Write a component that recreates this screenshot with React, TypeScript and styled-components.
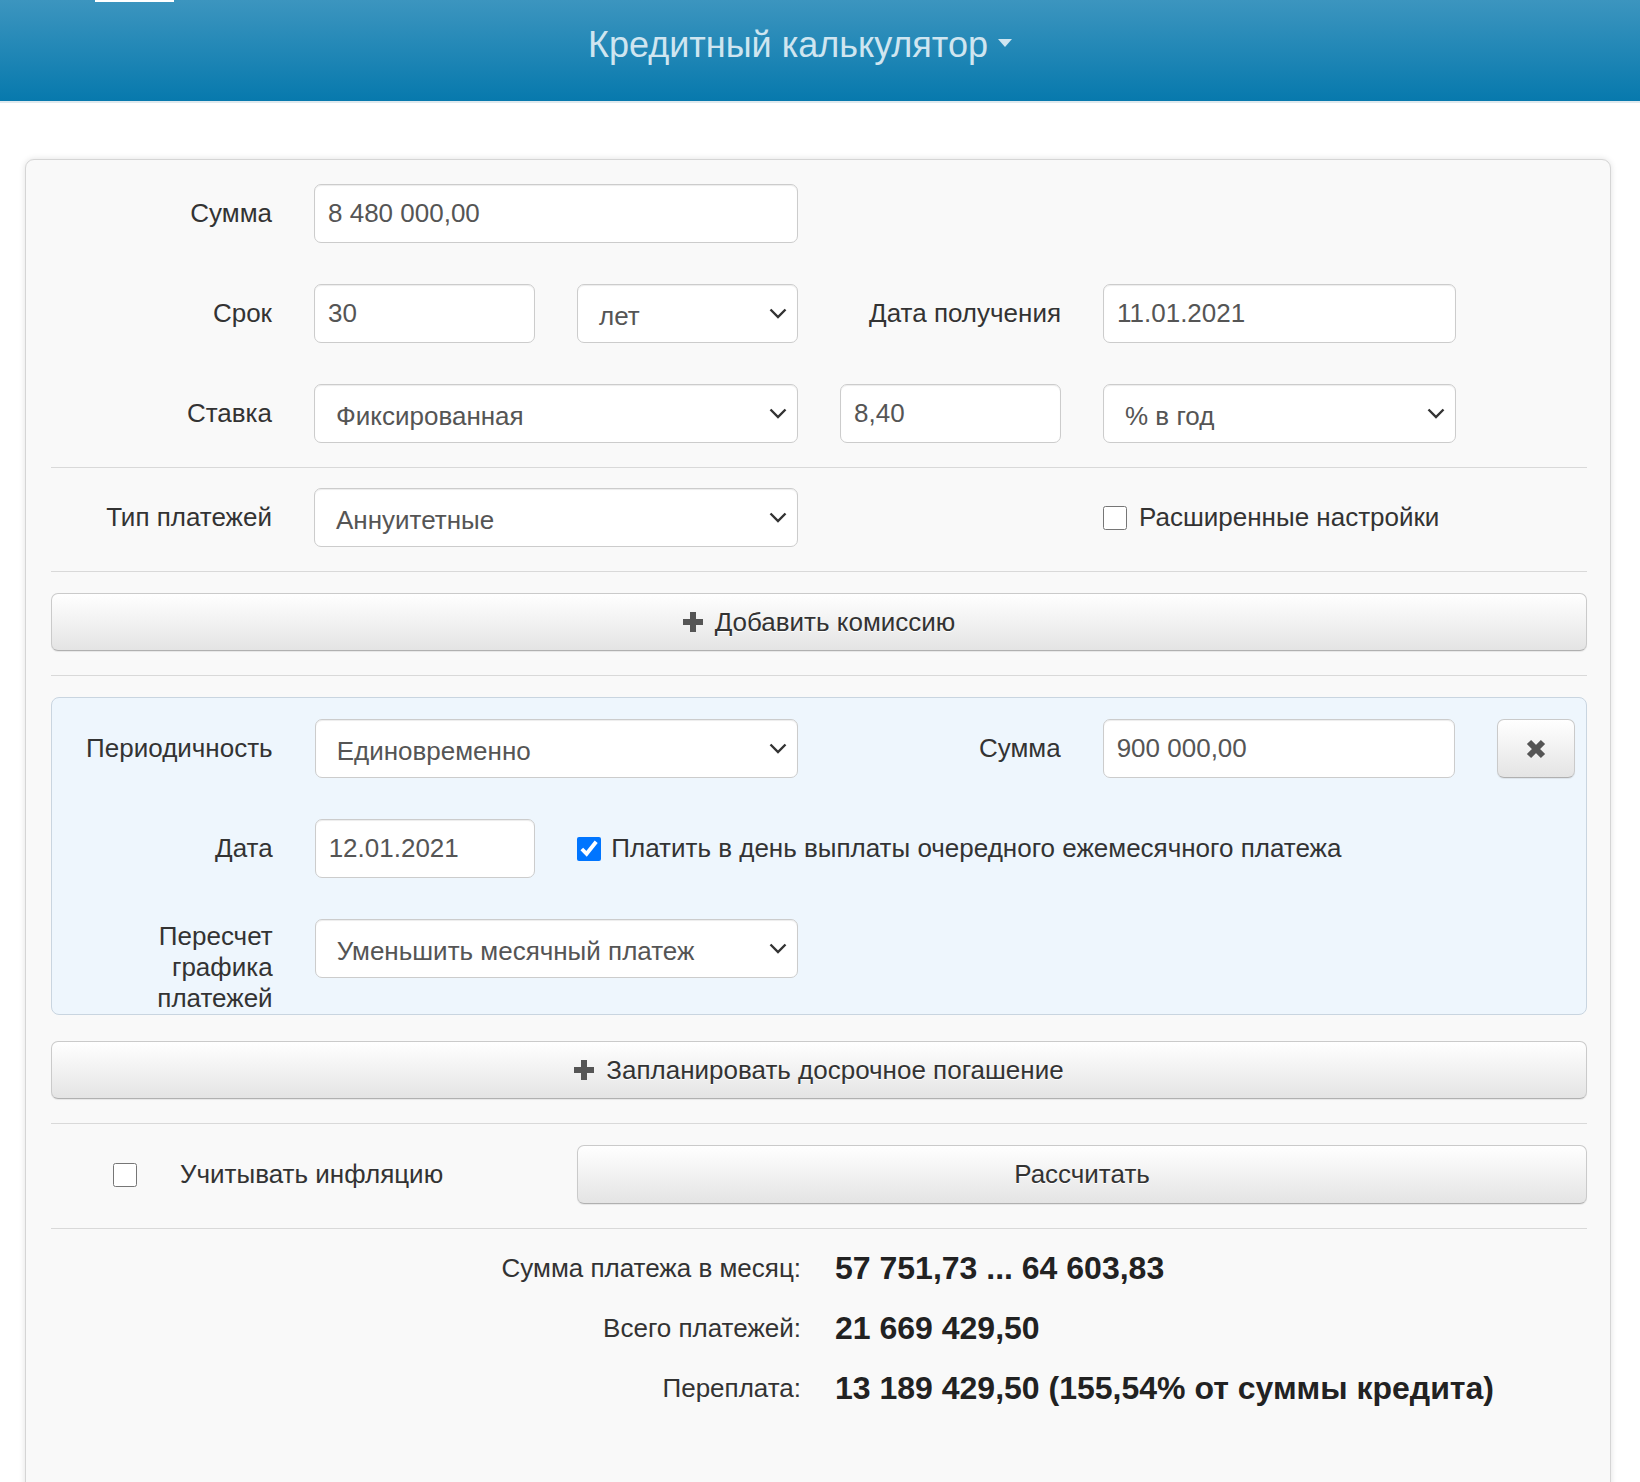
import React from "react";
import styled, { createGlobalStyle } from "styled-components";

const GlobalStyle = createGlobalStyle`
  html, body { margin: 0; padding: 0; background: #fff; }
  body { font-family: "Liberation Sans", Arial, Helvetica, sans-serif; color: #333; }
  *, *::before, *::after { box-sizing: border-box; }
`;

const Page = styled.div`
  width: 1640px;
  height: 1482px;
  overflow: hidden;
`;

const Header = styled.header`
  position: relative;
  height: 103px;
  background: linear-gradient(to bottom, #3c95bf 0%, #0779ad 100%);
  border-bottom: 2px solid #dfe9ee;
  display: flex;
  justify-content: center;
  align-items: flex-start;
  padding: 24px 40px 0 0;
`;

const ActiveTab = styled.span`
  position: absolute;
  top: 0;
  left: 95px;
  width: 79px;
  height: 2px;
  background: #fff;
`;

const Title = styled.div`
  display: flex;
  align-items: flex-start;
  gap: 10px;
  font-size: 36px;
  line-height: 42px;
  color: #cfe5f0;
`;

const Caret = styled.span`
  width: 0;
  height: 0;
  margin-top: 15px;
  border-left: 7px solid transparent;
  border-right: 7px solid transparent;
  border-top: 8px solid #cfe5f0;
`;

const Card = styled.main`
  width: 1586px;
  min-height: 1340px;
  margin: 56px 0 0 25px;
  background: #f9f9f9;
  border: 1px solid #d5d5d5;
  border-radius: 9px;
  box-shadow: 0 0 6px rgba(0, 0, 0, 0.12);
  padding: 24px 23px 0 25px;
  display: flex;
  flex-direction: column;
`;

const Rows = styled.div`
  display: flex;
  flex-direction: column;
  gap: 41px;
`;

const Grid = styled.div`
  display: grid;
  grid-template-columns: repeat(12, minmax(0, 1fr));
  column-gap: 42px;
  align-items: start;
`;

const Label = styled.label<{ $span?: number; $multi?: boolean }>`
  grid-column: span ${(p) => p.$span ?? 2};
  text-align: right;
  font-size: 26px;
  color: #333;
  line-height: ${(p) => (p.$multi ? "31px" : "32px")};
  padding-top: ${(p) => (p.$multi ? "2px" : "13px")};
`;

const Input = styled.input<{ $span: number }>`
  grid-column: span ${(p) => p.$span};
  width: 100%;
  min-width: 0;
  height: 59px;
  padding: 0 13px;
  font-family: inherit;
  font-size: 26px;
  color: #555;
  background: #fff;
  border: 1px solid #ccc;
  border-radius: 7px;
  box-shadow: inset 0 1px 1px rgba(0, 0, 0, 0.075);
  outline: none;
`;

const Select = styled.div<{ $span: number }>`
  grid-column: span ${(p) => p.$span};
  height: 59px;
  display: flex;
  align-items: center;
  justify-content: space-between;
  padding: 5px 10px 0 21px;
  font-size: 26px;
  color: #555;
  background: #fff;
  border: 1px solid #ccc;
  border-radius: 7px;
  box-shadow: inset 0 1px 1px rgba(0, 0, 0, 0.075);
`;

const ChevronIcon = styled.svg`
  flex: none;
  margin-top: -5px;
`;

const Chevron = () => (
  <ChevronIcon width="18" height="11" viewBox="0 0 18 11">
    <path d="M1.5 1.5 L9 9 L16.5 1.5" fill="none" stroke="#333" strokeWidth="2.4" />
  </ChevronIcon>
);

const CheckCell = styled.label<{ $span: number; $gap: number; $pad?: number; $start?: number }>`
  grid-column: ${(p) => (p.$start ? `${p.$start} / ` : "")}span ${(p) => p.$span};
  height: 59px;
  display: flex;
  align-items: center;
  gap: ${(p) => p.$gap}px;
  padding-left: ${(p) => p.$pad ?? 0}px;
  font-size: 26px;
  color: #333;
  white-space: nowrap;
`;

const Check = styled.input`
  flex: none;
  width: 24px;
  height: 24px;
  margin: 0;
  accent-color: #0075ff;
`;

const Divider = styled.hr<{ $tight?: boolean }>`
  width: 100%;
  height: 1px;
  border: 0;
  background: #d9d9d9;
  margin: 24px 0 ${(p) => (p.$tight ? "20px" : "21px")};
`;

const Button = styled.button<{ $span?: number; $h?: number }>`
  grid-column: span ${(p) => p.$span ?? 12};
  width: 100%;
  height: ${(p) => p.$h ?? 58}px;
  display: flex;
  align-items: center;
  justify-content: center;
  gap: 12px;
  font-family: inherit;
  font-size: 26px;
  color: #333;
  text-shadow: 0 1px 0 #fff;
  background: linear-gradient(to bottom, #ffffff 0%, #e4e4e4 100%);
  border: 1px solid #cacaca;
  border-bottom-color: #b0b0b0;
  border-radius: 7px;
  box-shadow: inset 0 1px 0 rgba(255, 255, 255, 0.15), 0 1px 1px rgba(0, 0, 0, 0.075);
  padding: 0;
`;

const CloseButton = styled(Button)`
  width: 78px;
`;

const PlusIcon = () => (
  <svg width="20" height="20" viewBox="0 0 20 20">
    <rect x="7" y="0" width="6" height="20" fill="#555" />
    <rect x="0" y="7" width="20" height="6" fill="#555" />
  </svg>
);

const RemoveIcon = () => (
  <svg width="20" height="20" viewBox="0 0 20 20">
    <path d="M3 3 L17 17 M17 3 L3 17" stroke="#555" strokeWidth="6" strokeLinecap="butt" />
  </svg>
);

const Panel = styled.section`
  background: #eef6fd;
  border: 1px solid #c9d5e0;
  border-radius: 8px;
  padding-top: 21px;
  margin-bottom: 26px;
`;

const Results = styled.div`
  display: grid;
  grid-template-columns: 750px 1fr;
  column-gap: 34px;
  row-gap: 20px;
  margin-top: -2px;
`;

const ResLabel = styled.div`
  text-align: right;
  font-size: 26px;
  line-height: 40px;
  color: #333;
`;

const ResValue = styled.div`
  font-size: 32px;
  font-weight: bold;
  line-height: 40px;
  color: #222;
`;

export default function App() {
  return (
    <Page>
      <GlobalStyle />
      <Header>
        <ActiveTab />
        <Title>
          <span>Кредитный калькулятор</span>
          <Caret />
        </Title>
      </Header>
      <Card>
        <Rows>
          <Grid>
            <Label>Сумма</Label>
            <Input $span={4} defaultValue="8 480 000,00" readOnly />
          </Grid>
          <Grid>
            <Label>Срок</Label>
            <Input $span={2} defaultValue="30" readOnly />
            <Select $span={2}>
              <span>лет</span>
              <Chevron />
            </Select>
            <Label>Дата получения</Label>
            <Input $span={3} defaultValue="11.01.2021" readOnly />
          </Grid>
          <Grid>
            <Label>Ставка</Label>
            <Select $span={4}>
              <span>Фиксированная</span>
              <Chevron />
            </Select>
            <Input $span={2} defaultValue="8,40" readOnly />
            <Select $span={3}>
              <span>% в год</span>
              <Chevron />
            </Select>
          </Grid>
        </Rows>
        <Divider $tight />
        <Grid>
          <Label>Тип платежей</Label>
          <Select $span={4}>
            <span>Аннуитетные</span>
            <Chevron />
          </Select>
          <CheckCell $span={4} $gap={12} $start={9}>
            <Check type="checkbox" />
            Расширенные настройки
          </CheckCell>
        </Grid>
        <Divider />
        <Button>
          <PlusIcon />
          Добавить комиссию
        </Button>
        <Divider />
        <Panel>
          <Rows>
            <Grid>
              <Label>Периодичность</Label>
              <Select $span={4}>
                <span>Единовременно</span>
                <Chevron />
              </Select>
              <Label>Сумма</Label>
              <Input $span={3} defaultValue="900 000,00" readOnly />
              <CloseButton $span={1} $h={59} aria-label="Удалить">
                <RemoveIcon />
              </CloseButton>
            </Grid>
            <Grid>
              <Label>Дата</Label>
              <Input $span={2} defaultValue="12.01.2021" readOnly />
              <CheckCell $span={8} $gap={10}>
                <Check type="checkbox" defaultChecked />
                Платить в день выплаты очередного ежемесячного платежа
              </CheckCell>
            </Grid>
            <Grid>
              <Label $multi>
                Пересчет
                <br />
                графика
                <br />
                платежей
              </Label>
              <Select $span={4}>
                <span>Уменьшить месячный платеж</span>
                <Chevron />
              </Select>
            </Grid>
          </Rows>
        </Panel>
        <Button>
          <PlusIcon />
          Запланировать досрочное погашение
        </Button>
        <Divider />
        <Grid>
          <CheckCell $span={4} $gap={43} $pad={62}>
            <Check type="checkbox" />
            Учитывать инфляцию
          </CheckCell>
          <Button $span={8} $h={59}>
            Рассчитать
          </Button>
        </Grid>
        <Divider />
        <Results>
          <ResLabel>Сумма платежа в месяц:</ResLabel>
          <ResValue>57 751,73 ... 64 603,83</ResValue>
          <ResLabel>Всего платежей:</ResLabel>
          <ResValue>21 669 429,50</ResValue>
          <ResLabel>Переплата:</ResLabel>
          <ResValue>13 189 429,50 (155,54% от суммы кредита)</ResValue>
        </Results>
      </Card>
    </Page>
  );
}
